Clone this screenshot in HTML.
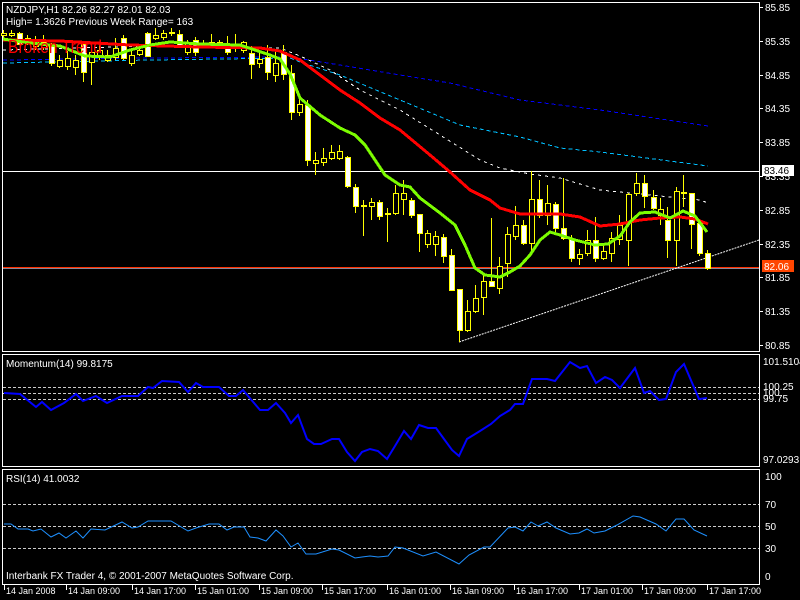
<!DOCTYPE html>
<html><head><meta charset="utf-8"><style>
html,body{margin:0;padding:0;background:#000;width:800px;height:600px;overflow:hidden}
svg{display:block}
text{font-family:"Liberation Sans",sans-serif;font-size:10px;fill:#fff}
</style></head><body>
<svg id="s" width="800" height="600" xmlns="http://www.w3.org/2000/svg" shape-rendering="crispEdges">
<rect width="800" height="600" fill="#000"/>
<rect x="2.5" y="2.5" width="757" height="349" fill="none" stroke="#fff"/>
<rect x="2.5" y="354.5" width="757" height="112" fill="none" stroke="#fff"/>
<rect x="2.5" y="469.5" width="757" height="115" fill="none" stroke="#fff"/>
<polyline fill="none" stroke="#0000ff" stroke-width="1" stroke-dasharray="4,3" points="3,60 150,58 290,57 340,65 400,75 450,83 520,100 600,110 708,126"/>
<polyline fill="none" stroke="#00bfff" stroke-width="1" stroke-dasharray="4,3" points="3,63 150,60 290,58 300,62 340,75 400,100 460,125 520,137 560,148 600,152 708,166"/>
<polyline fill="none" stroke="#fff" stroke-width="1" stroke-dasharray="3,4" points="3,50 150,46 280,48 300,56 330,70 360,90 400,110 440,135 480,160 500,168 530,174 560,178 600,190 640,194 700,200 708,203"/>
<line x1="3" y1="171.5" x2="759" y2="171.5" stroke="#fff"/>
<line x1="3" y1="267.5" x2="759" y2="267.5" stroke="#ff3000"/>
<line x1="3" y1="268.5" x2="759" y2="268.5" stroke="#889"/>
<line x1="459" y1="342" x2="759" y2="240" stroke="#fff" stroke-dasharray="2,1" shape-rendering="auto"/>
<g id="candles"></g>
<polyline fill="none" stroke="#ff0000" stroke-width="3" points="3,40 60,41 130,45 200,47 260,48 280,51 300,60 320,75 340,90 360,103 380,118 400,130 430,155 450,172 470,190 490,200 500,208 520,214 560,214 580,217 600,226 620,224 640,220 660,218 680,217 695,219 708,224"/>
<polyline fill="none" stroke="#7cfc00" stroke-width="3" points="3,39 30,43 60,46 85,56 110,57 130,50 150,45 170,42 200,44 240,45 255,50 270,55 280,59 290,74 300,98 320,115 340,128 355,135 365,145 375,160 385,175 400,185 410,187 420,198 440,213 455,225 465,245 475,268 485,275 500,277 510,272 520,266 530,255 540,240 550,232 560,235 575,240 595,245 608,244 620,236 630,222 640,213 655,212 670,218 683,211 695,216 707,232"/>
<text x="8" y="53" style="font-size:18px;fill:#ff0000" textLength="94" lengthAdjust="spacingAndGlyphs">Broken Trend</text>
<text x="6" y="13">NZDJPY,H1  82.26 82.27 82.01 82.03</text>
<text x="6" y="25">High= 1.3626    Previous Week Range= 163</text>
<g id="axis"></g>
<rect x="762" y="165" width="32" height="11" fill="#fff"/>
<text x="764" y="174" style="fill:#000">83.46</text>
<rect x="762" y="260" width="32" height="12" fill="#ff4500"/>
<text x="764" y="270">82.06</text>
<line x1="3" y1="387.5" x2="759" y2="387.5" stroke="#ccc" stroke-dasharray="3,2"/>
<line x1="3" y1="393.5" x2="759" y2="393.5" stroke="#ccc" stroke-dasharray="3,2"/>
<line x1="3" y1="399.5" x2="759" y2="399.5" stroke="#ccc" stroke-dasharray="3,2"/>
<polyline fill="none" stroke="#0000ff" stroke-width="2" shape-rendering="auto" points="4,393 20,394 36,407 42,402 51,410 64,403 76,394 83,401 96,396 107,403 122,396 138,396 148,387 153,388 162,381 179,382 188,392 196,383 203,387 219,387 229,396 236,396 243,390 260,410 268,410 276,403 285,413 291,423 298,415 307,439 314,444 321,444 332,439 339,439 347,452 355,461 362,452 370,449 378,451 387,459 395,446 404,431 411,439 419,425 428,428 436,428 444,439 452,450 459,456 467,439 480,431 491,424 500,416 510,410 515,404 523,404 532,379 541,379 547,379 555,381 570,362 580,368 587,366 596,383 605,377 612,380 620,388 635,368 644,393 650,391 659,400 666,399 676,372 684,364 699,399 707,398"/>
<text x="6" y="367">Momentum(14) 99.8175</text>
<text x="763" y="365">101.5104</text>
<text x="763" y="390">100.25</text>
<text x="763" y="396">100</text>
<text x="763" y="402">99.75</text>
<text x="763" y="463">97.0293</text>
<line x1="3" y1="504.5" x2="759" y2="504.5" stroke="#ccc" stroke-dasharray="3,2"/>
<line x1="3" y1="526.5" x2="759" y2="526.5" stroke="#ccc" stroke-dasharray="3,2"/>
<line x1="3" y1="548.5" x2="759" y2="548.5" stroke="#ccc" stroke-dasharray="3,2"/>
<polyline fill="none" stroke="#1e90ff" stroke-width="1" shape-rendering="auto" points="4,524 11,524 18,529 28,529 33,531 41,529 51,537 59,533 66,538 76,531 83,538 91,529 105,530 122,522 132,528 138,527 148,521 158,521 171,521 188,531 196,528 209,524 219,524 227,530 234,527 244,527 250,537 258,538 266,541 276,530 283,536 291,547 298,543 306,554 316,554 332,549 339,550 355,558 362,557 370,556 378,557 388,556 395,547 403,548 423,556 436,552 459,564 469,555 484,547 490,547 508,528 515,527 523,531 531,522 538,526 547,522 556,528 570,534 579,533 587,529 594,533 605,531 617,525 633,516 640,517 656,524 666,531 676,519 684,519 694,530 707,536"/>
<text x="6" y="482">RSI(14) 41.0032</text>
<text x="6" y="579">Interbank FX Trader 4, © 2001-2007 MetaQuotes Software Corp.</text>
<text x="765" y="480">100</text>
<text x="765" y="508">70</text>
<text x="765" y="530">50</text>
<text x="765" y="552">30</text>
<text x="765" y="580">0</text>
<g id="time"></g>
</svg>
<script>
var NS="http://www.w3.org/2000/svg";
function el(p,t,a){var e=document.createElementNS(NS,t);for(var k in a)e.setAttribute(k,a[k]);p.appendChild(e);return e;}
var C=[[3,33,35,30,40,0],[11,33,35,30,37,0],[19,33,44,32,45,1],[27,38,42,35,45,0],[35,40,46,36,50,0],[43,42,47,35,50,0],[51,46,63,43,66,1],[59,60,66,55,68,0],[67,58,66,51,70,0],[75,60,67,55,75,0],[83,44,72,44,82,1],[91,52,62,50,85,0],[99,50,56,45,60,0],[107,55,60,50,62,0],[115,48,57,38,60,0],[123,38,58,35,60,1],[131,55,63,50,66,0],[139,50,54,48,56,0],[147,33,56,32,57,1],[155,35,38,28,40,0],[163,33,37,30,40,0],[171,32,33,28,36,0],[179,34,45,30,46,1],[187,43,52,40,55,0],[195,40,52,37,56,1],[203,43,45,40,48,0],[211,42,46,34,47,0],[219,42,45,40,48,0],[227,44,52,36,55,1],[235,44,48,34,52,0],[243,42,50,41,53,0],[251,53,64,46,79,1],[259,59,63,50,68,0],[267,57,72,45,80,1],[275,63,75,52,82,0],[283,52,74,45,80,1],[291,73,112,65,120,1],[299,104,112,97,116,0],[307,105,160,100,166,1],[315,160,163,152,175,0],[323,158,162,148,166,0],[331,152,158,145,160,0],[339,151,158,145,160,0],[347,157,186,156,188,1],[355,187,206,184,213,1],[363,205,206,200,236,0],[371,202,206,198,220,0],[379,202,216,200,220,1],[387,213,214,208,242,0],[395,193,213,185,215,0],[403,193,199,180,215,0],[411,200,215,198,218,1],[419,214,233,214,252,1],[427,233,244,230,248,0],[435,236,244,231,256,0],[443,237,256,234,263,1],[451,255,290,249,290,1],[459,289,330,289,342,1],[467,311,330,300,332,0],[475,298,311,285,313,0],[483,281,297,275,315,0],[491,281,286,218,286,1],[499,266,288,257,294,0],[507,234,263,227,277,0],[515,225,236,206,240,0],[523,225,243,220,245,1],[531,199,243,171,252,0],[539,199,215,180,218,1],[547,203,215,185,225,0],[555,204,228,202,232,1],[563,228,238,178,240,1],[571,239,258,235,262,1],[579,254,258,249,265,0],[587,240,253,230,256,0],[595,240,258,217,262,1],[603,251,258,245,260,0],[611,238,253,232,262,0],[619,225,239,215,245,0],[628,194,240,193,266,0],[636,183,193,173,196,0],[644,183,196,175,208,1],[653,197,208,190,210,1],[660,209,215,198,225,0],[667,220,240,207,258,1],[676,191,240,187,266,0],[683,192,193,175,207,0],[691,193,224,193,249,1],[699,223,253,220,256,1],[707,253,268,250,270,1]];
var g=document.getElementById("candles");
C.forEach(function(c){
 el(g,"line",{x1:c[0]+.5,y1:c[3],x2:c[0]+.5,y2:c[4],stroke:"#ffff00"});
 var h=Math.max(c[2]-c[1],1);
 el(g,"rect",{x:c[0]-2+.5,y:c[1]+.5,width:5,height:h,fill:c[5]?"#fff":"#000",stroke:"#ffff00"});
});
var ax=document.getElementById("axis");
var L=["85.85","85.35","84.85","84.35","83.85","83.35","82.85","82.35","81.85","81.35","80.85"];
L.forEach(function(t,i){var y=7+i*33.8;el(ax,"line",{x1:760,y1:Math.round(y)+.5,x2:763,y2:Math.round(y)+.5,stroke:"#fff"});var e=el(ax,"text",{x:765,y:Math.round(y)+4});e.textContent=t;});
var tm=document.getElementById("time");
var T=["14 Jan 2008","14 Jan 09:00","14 Jan 17:00","15 Jan 01:00","15 Jan 09:00","15 Jan 17:00","16 Jan 01:00","16 Jan 09:00","16 Jan 17:00","17 Jan 01:00","17 Jan 09:00","17 Jan 17:00"];
var X=[4,66,132,195,259,322,387,450,514,579,642,707];
T.forEach(function(t,i){el(tm,"line",{x1:X[i]+.5,y1:585,x2:X[i]+.5,y2:590,stroke:"#fff"});var e=el(tm,"text",{x:X[i]+2,y:594,style:"font-size:9px"});e.textContent=t;});
</script>
</body></html>
